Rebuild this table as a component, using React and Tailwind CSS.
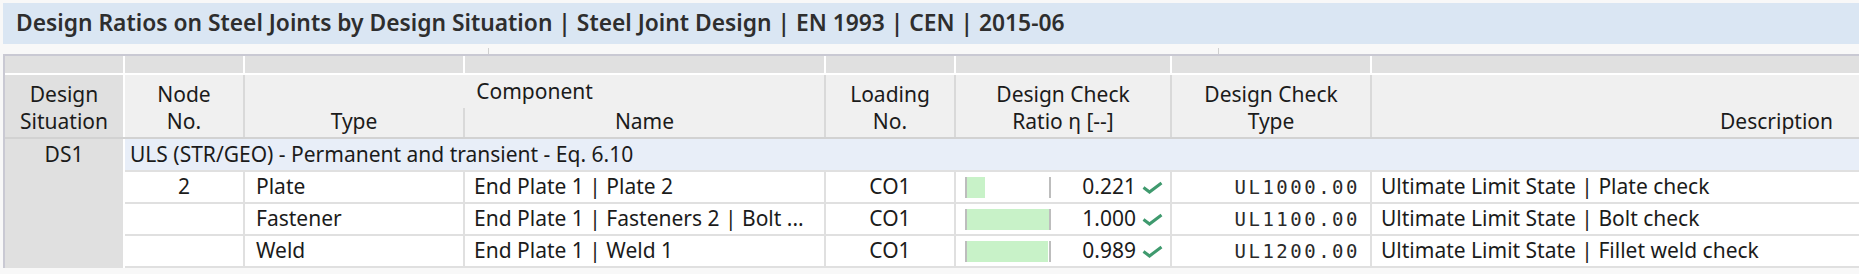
import React from "react";

const rows = [
    { node: "2", type: "Plate", name: "End Plate 1 | Plate 2", load: "CO1", ratio: 0.221, check: "UL1000.00", desc: "Ultimate Limit State | Plate check" },
    { node: "", type: "Fastener", name: "End Plate 1 | Fasteners 2 | Bolt ...", load: "CO1", ratio: 1.0, check: "UL1100.00", desc: "Ultimate Limit State | Bolt check" },
    { node: "", type: "Weld", name: "End Plate 1 | Weld 1", load: "CO1", ratio: 0.989, check: "UL1200.00", desc: "Ultimate Limit State | Fillet weld check" },
];

function Check() {
    return (
        <svg width="21" height="13" viewBox="0 0 21 13" className="ml-[6px] shrink-0">
            <path d="M1.5 6.5 L7.5 11 L19.5 2" fill="none" stroke="#3f9a6e" strokeWidth="3" strokeLinejoin="miter" />
        </svg>
    );
}

function HeadCell({ w, top, bottom, dark }) {
    return (
        <div className={`${w} h-full shrink-0 border-r-2 ${dark ? "bg-[#e0e0e0] border-white" : "bg-[#f0f0f0] border-[#d9d9d9]"} pt-[6px] leading-[27px] text-center`}>
            <div className="h-[27px]">{top}</div>
            <div className="h-[27px]">{bottom}</div>
        </div>
    );
}

export default function App() {
    const cols = ["w-[120px]", "w-[120px]", "w-[220px]", "w-[361px]", "w-[130px]", "w-[216px]", "w-[200px]"];

    return (
        <div className="w-[1859px] h-[274px] overflow-hidden bg-[#f8f8f8] pt-[3px] font-['Noto_Sans',sans-serif] text-[21px] text-[#1b1b1b]">
            <div className="ml-[3px] h-[41px] bg-[#dae6f3] flex items-center pl-[13px] text-[22.8px] font-semibold text-[#2e2e2e] whitespace-nowrap">
                Design Ratios on Steel Joints by Design Situation | Steel Joint Design | EN 1993 | CEN | 2015-06
            </div>

            <div className="flex h-[10px]">
                <div className="w-[488px]" />
                <div className="w-px h-[6px] self-end bg-[#cfcfcf]" />
                <div className="w-[729px]" />
                <div className="w-px h-[6px] self-end bg-[#cfcfcf]" />
            </div>

            <div className="ml-[3px] border-l-2 border-t-2 border-[#c9c9d3]">
                {/* header top strip */}
                <div className="flex h-[19px] border-b-2 border-white">
                    {cols.map((c, i) => (
                        <div key={i} className={`${c} shrink-0 bg-[#e0e0e0] border-r-2 border-white`} />
                    ))}
                    <div className="flex-1 bg-[#e0e0e0]" />
                </div>

                {/* header labels */}
                <div className="flex h-[64px] border-b-2 border-[#d2d2d2] whitespace-nowrap">
                    <HeadCell w="w-[120px]" top="Design" bottom="Situation" dark />
                    <HeadCell w="w-[120px]" top="Node" bottom="No." />
                    <div className="w-[581px] shrink-0 h-full flex flex-col bg-[#f0f0f0] border-r-2 border-[#d9d9d9]">
                        <div className="h-[33px] flex items-center justify-center">Component</div>
                        <div className="flex flex-1 leading-[27px]">
                            <div className="w-[220px] border-r-2 border-[#d9d9d9] text-center">Type</div>
                            <div className="flex-1 text-center">Name</div>
                        </div>
                    </div>
                    <HeadCell w="w-[130px]" top="Loading" bottom="No." />
                    <HeadCell w="w-[216px]" top="Design Check" bottom="Ratio η [--]" />
                    <HeadCell w="w-[200px]" top="Design Check" bottom="Type" />
                    <div className="flex-1 h-full bg-[#f0f0f0] pt-[6px] leading-[27px] text-right pr-[26px]">
                        <div className="h-[27px]" />
                        <div className="h-[27px]">Description</div>
                    </div>
                </div>

                {/* body */}
                <div className="flex">
                    <div className="w-[118px] shrink-0 bg-[#e0e0e0]">
                        <div className="h-[31px] flex items-center justify-center">DS1</div>
                    </div>
                    <div className="w-[2px] shrink-0 bg-white" />
                    <div className="flex-1 flex flex-col">
                        <div className="h-[33px] flex items-center pl-[5px] bg-[#e8eef8] border-b-2 border-[#e0e0e0] whitespace-nowrap">
                            ULS (STR/GEO) - Permanent and transient - Eq. 6.10
                        </div>
                        {rows.map((r, i) => (
                            <div key={i} className="flex h-[32px] bg-white border-b-2 border-[#e0e0e0] whitespace-nowrap">
                                <div className="w-[120px] shrink-0 border-r-2 border-[#e0e0e0] flex items-center justify-center">{r.node}</div>
                                <div className="w-[220px] shrink-0 border-r-2 border-[#e0e0e0] flex items-center pl-[11px]">{r.type}</div>
                                <div className="w-[361px] shrink-0 border-r-2 border-[#e0e0e0] flex items-center pl-[9px] overflow-hidden">{r.name}</div>
                                <div className="w-[130px] shrink-0 border-r-2 border-[#e0e0e0] flex items-center justify-center">{r.load}</div>
                                <div className="w-[216px] shrink-0 border-r-2 border-[#e0e0e0] flex items-center pl-[9px] pr-[7px]">
                                    <div className="w-[86px] h-[21px] shrink-0 border-x-2 border-[#bdbdbd] bg-white">
                                        <div className="h-full bg-[#c8f2c8]" style={{ width: `${Math.min(r.ratio, 1) * 82}px` }} />
                                    </div>
                                    <div className="flex-1 text-right">{r.ratio.toFixed(3)}</div>
                                    <Check />
                                </div>
                                <div className="w-[200px] shrink-0 border-r-2 border-[#e0e0e0] flex items-center justify-end pr-[10px] font-['DejaVu_Sans_Mono',monospace] text-[19px] tracking-[2.5px] text-[#2a2a2a]">
                                    {r.check}
                                </div>
                                <div className="flex-1 flex items-center pl-[9px]">{r.desc}</div>
                            </div>
                        ))}
                    </div>
                </div>
            </div>
        </div>
    );
}
